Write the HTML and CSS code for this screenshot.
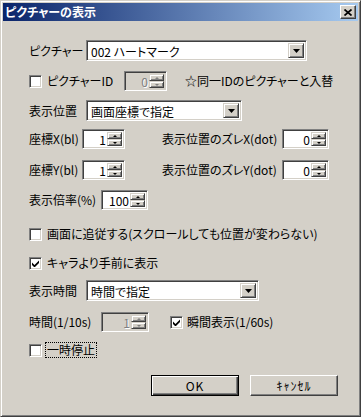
FILE: index.html
```html
<!DOCTYPE html>
<html lang="ja">
<head>
    <meta charset="UTF-8">
    <link rel="stylesheet" href="styles.css">
    <title>ピクチャーの表示</title>
</head>
<body>
    <div class="dialog">
        <div class="titlebar">
            <span class="title">ピクチャーの表示</span>
            <span class="close">
                <svg width="8" height="7" viewBox="0 0 8 7"><path d="M0.5 0.5 L7.5 6.5 M7.5 0.5 L0.5 6.5" stroke="#000" stroke-width="1.7"/></svg>
            </span>
        </div>

        <div class="content">
            <div class="row r1">
                <span class="lbl w57">ピクチャー</span>
                <div class="combo w221">
                    <span class="combo-text">002 ハートマーク</span>
                    <span class="drop"><svg width="7" height="4" viewBox="0 0 7 4"><path d="M0 0 H7 L3.5 4 Z" fill="#000"/></svg></span>
                </div>
            </div>

            <div class="row r2">
                <span class="box"></span>
                <span class="lbl w77 gap5">ピクチャーID</span>
                <div class="spin w43 disabled">
                    <span class="val">0</span>
                    <span class="arrows"><span class="up"></span><span class="down"></span></span>
                </div>
                <span class="lbl ml18">☆同一IDのピクチャーと入替</span>
            </div>

            <div class="row r3">
                <span class="lbl w57">表示位置</span>
                <div class="combo w156">
                    <span class="combo-text">画面座標で指定</span>
                    <span class="drop"><svg width="7" height="4" viewBox="0 0 7 4"><path d="M0 0 H7 L3.5 4 Z" fill="#000"/></svg></span>
                </div>
            </div>

            <div class="row r4">
                <span class="lbl w53">座標X(bl)</span>
                <div class="spin w43">
                    <span class="val">1</span>
                    <span class="arrows"><span class="up"></span><span class="down"></span></span>
                </div>
                <span class="lbl w120 ml37">表示位置のズレX(dot)</span>
                <div class="spin w47">
                    <span class="val">0</span>
                    <span class="arrows"><span class="up"></span><span class="down"></span></span>
                </div>
            </div>

            <div class="row r5">
                <span class="lbl w53">座標Y(bl)</span>
                <div class="spin w43">
                    <span class="val">1</span>
                    <span class="arrows"><span class="up"></span><span class="down"></span></span>
                </div>
                <span class="lbl w120 ml37">表示位置のズレY(dot)</span>
                <div class="spin w47">
                    <span class="val">0</span>
                    <span class="arrows"><span class="up"></span><span class="down"></span></span>
                </div>
            </div>

            <div class="row r6">
                <span class="lbl w72">表示倍率(%)</span>
                <div class="spin w47">
                    <span class="val">100</span>
                    <span class="arrows"><span class="up"></span><span class="down"></span></span>
                </div>
            </div>

            <div class="row r7">
                <span class="box"></span>
                <span class="lbl gap5">画面に追従する(スクロールしても位置が変わらない)</span>
            </div>

            <div class="row r8">
                <span class="box checked"><svg width="7" height="7" viewBox="0 0 7 7"><path d="M0 2.5 L2.5 5 L7 0.5 V3 L2.5 7.5 L0 5 Z" fill="#000"/></svg></span>
                <span class="lbl gap5">キャラより手前に表示</span>
            </div>

            <div class="row r9">
                <span class="lbl w57">表示時間</span>
                <div class="combo w173">
                    <span class="combo-text">時間で指定</span>
                    <span class="drop"><svg width="7" height="4" viewBox="0 0 7 4"><path d="M0 0 H7 L3.5 4 Z" fill="#000"/></svg></span>
                </div>
            </div>

            <div class="row r10">
                <span class="lbl w72">時間(1/10s)</span>
                <div class="spin w48 disabled">
                    <span class="val">1</span>
                    <span class="arrows"><span class="up"></span><span class="down"></span></span>
                </div>
                <span class="box checked ml21"><svg width="7" height="7" viewBox="0 0 7 7"><path d="M0 2.5 L2.5 5 L7 0.5 V3 L2.5 7.5 L0 5 Z" fill="#000"/></svg></span>
                <span class="lbl gap4">瞬間表示(1/60s)</span>
            </div>

            <div class="row r11">
                <span class="box"></span>
                <span class="lbl gap4 focus">一時停止</span>
            </div>

            <div class="row r12">
                <button class="btn default">OK</button>
                <button class="btn">ｷｬﾝｾﾙ</button>
            </div>
        </div>
    </div>
</body>
</html>
```

FILE: styles.css
```css
*{
    margin: 0;
    padding: 0;
    box-sizing: border-box;
}
body{
    width: 361px;
    height: 417px;
    overflow: hidden;
    background: #d4d0c8;
    font-family: "Noto Sans CJK JP", "Noto Sans", sans-serif;
    font-size: 12px;
    font-feature-settings: "palt";
    color: #000;
}
.dialog{
    width: 361px;
    height: 417px;
    background: #d4d0c8;
    border: 1px solid;
    border-color: #d4d0c8 #404040 #404040 #d4d0c8;
    box-shadow: inset 1px 1px #fff, inset -1px -1px #808080;
    padding: 2px;
    display: flex;
    flex-direction: column;
}
.titlebar{
    height: 18px;
    background: linear-gradient(to right, #0a246a, #a6caf0);
    display: flex;
    align-items: center;
    justify-content: space-between;
    padding: 0 2px;
}
.title{
    color: #fff;
    font-weight: bold;
    line-height: 18px;
}
.close{
    width: 16px;
    height: 14px;
    background: #d4d0c8;
    border: 1px solid;
    border-color: #fff #404040 #404040 #fff;
    box-shadow: inset -1px -1px #808080;
    display: flex;
    align-items: center;
    justify-content: center;
}
.close svg{
    display: block;
    margin-left: -1px;
}

/* form */
.content{
    display: flex;
    flex-direction: column;
    padding-left: 26px;
}
.row{
    display: flex;
    align-items: center;
    height: 20px;
}
.r1{ margin-top: 19px; height: 21px; }
.r2{ margin-top: 10px; }
.r3{ margin-top: 9px; height: 21px; }
.r4{ margin-top: 8px; }
.r5{ margin-top: 11px; }
.r6{ margin-top: 10px; }
.r7{ margin-top: 14px; }
.r8{ margin-top: 9px; }
.r9{ margin-top: 7px; height: 21px; }
.r10{ margin-top: 11px; }
.r11{ margin-top: 8px; }
.r12{
    margin-top: 15px;
    height: 21px;
    justify-content: flex-end;
    gap: 11px;
    padding-right: 20px;
}

.lbl{
    line-height: 14px;
    white-space: nowrap;
    flex-shrink: 0;
}
.w53{ width: 53px; }
.w57{ width: 57px; }
.w72{ width: 72px; }
.w77{ width: 77px; }
.w120{ width: 120px; }
.gap4{ margin-left: 4px; }
.gap5{ margin-left: 5px; }
.ml18{ margin-left: 18px; }
.ml21{ margin-left: 21px; }
.ml37{ margin-left: 37px; }

.focus{
    outline: 1px dotted #000;
    outline-offset: 0;
    padding: 0 1px;
}

/* sunken things */
.combo, .spin, .box{
    background: #fff;
    border: 1px solid;
    border-color: #808080 #fff #fff #808080;
    box-shadow: inset 1px 1px #404040, inset -1px -1px #d4d0c8;
    flex-shrink: 0;
}
.combo{
    height: 21px;
    padding: 2px;
    display: flex;
    align-items: stretch;
}
.w156{ width: 156px; }
.w173{ width: 173px; }
.w221{ width: 221px; }
.combo-text{
    flex: 1;
    padding-left: 2px;
    line-height: 17px;
    white-space: nowrap;
}
.drop{
    width: 16px;
    background: #d4d0c8;
    border: 1px solid;
    border-color: #d4d0c8 #404040 #404040 #d4d0c8;
    box-shadow: inset 1px 1px #fff, inset -1px -1px #808080;
    display: flex;
    align-items: center;
    justify-content: center;
}
.drop svg{ display: block; }

.spin{
    height: 20px;
    padding: 2px;
    display: flex;
}
.w43{ width: 43px; }
.w47{ width: 47px; }
.w48{ width: 48px; }
.val{
    flex: 1;
    text-align: right;
    padding-right: 1px;
    line-height: 16px;
}
.arrows{
    width: 15px;
    display: flex;
    flex-direction: column;
}
.up, .down{
    flex: 1;
    background: #d4d0c8;
    border: 1px solid;
    border-color: #d4d0c8 #404040 #404040 #d4d0c8;
    box-shadow: inset 1px 1px #fff, inset -1px -1px #808080;
    position: relative;
}
.up::after, .down::after{
    content: "";
    position: absolute;
    left: 5px;
    top: 2px;
    border-left: 2px solid transparent;
    border-right: 2px solid transparent;
}
.up::after{ border-bottom: 2px solid #000; }
.down::after{ border-top: 2px solid #000; }

.spin.disabled{ background: #d4d0c8; }
.spin.disabled .val{
    color: #808080;
    text-shadow: 1px 1px #fff;
}
.spin.disabled .up::after{ border-bottom-color: #808080; }
.spin.disabled .down::after{ border-top-color: #808080; }

.box{
    width: 13px;
    height: 13px;
    display: flex;
    align-items: center;
    justify-content: center;
}
.box svg{
    display: block;
    margin-top: 1px;
}

/* buttons */
.btn{
    width: 88px;
    height: 21px;
    font-family: inherit;
    font-size: 12px;
    font-feature-settings: "palt";
    background: #d4d0c8;
    color: #000;
    border: 1px solid;
    border-color: #fff #404040 #404040 #fff;
    box-shadow: inset -1px -1px #808080;
    letter-spacing: 1px;
}
.btn.default{
    border-color: #000;
    box-shadow: inset 1px 1px #fff, inset -1px -1px #404040, inset -2px -2px #808080;
}
```
